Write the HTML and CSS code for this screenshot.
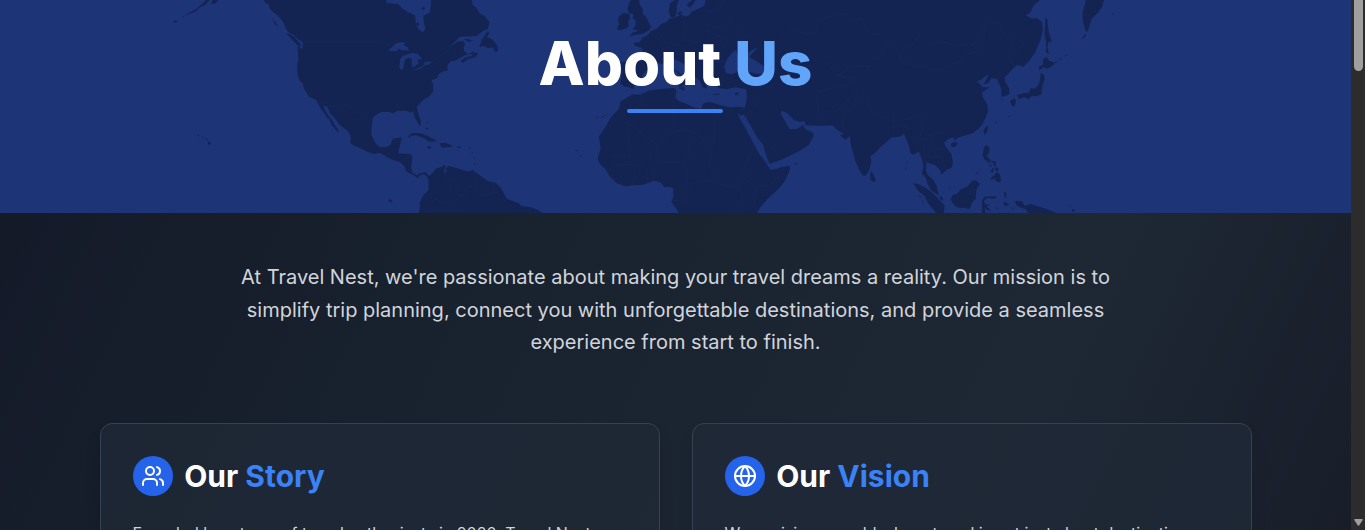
FILE: index.html
```html
<!DOCTYPE html>
<html lang="en">
<head>
<meta charset="utf-8">
<title>About Us - Travel Nest</title>
<link rel="stylesheet" href="styles.css">
</head>
<body>
<div class="viewport">
<main class="page">
  <header class="hero">
    <svg class="map" viewBox="0 0 1351 213" aria-hidden="true">
      <g class="land" transform="translate(160 0) scale(.33333)">
        <path d="M312 0 318 12 324 10 330 28 338 35 348 42 358 52 368 64 376 82 385 97 402 106 414 118 428 126 429 142 425 146 413 137 414 160 415 180 411 194 413 226 420 244 428 250 432 266 441 280 447 290 468 299 474 310 482 326 492 338 500 352 508 358 516 376 526 388 536 398 534 388 524 376 518 362 506 348 498 336 491 322 494 316 504 324 510 340 522 352 534 368 546 380 560 390 571 404 573 420 570 428 584 438 604 446 622 455 642 462 656 458 668 462 684 474 706 482 720 486 734 500 738 514 758 524 774 534 780 526 792 522 802 532 806 544 807 562 803 574 790 586 780 606 779 624 776 640H1080V611L1054 602 1042 598 1030 606 1037 592 1027 572 1008 548 984 544 968 532 940 512 920 514 908 510 882 502 864 498 858 506 855 494 846 500 828 506 818 518 808 528 796 516 780 520 770 526 758 518 753 502 756 486 756 466 744 462 714 460 720 436 725 412 698 416 692 434 680 441 660 442 646 430 634 404 635 380 638 354 652 342 666 336 690 336 700 340 712 332 740 332 752 338 760 334 764 352 774 370 780 379 783 364 776 344 770 322 776 314 792 298 806 290 819 276 820 254 814 240 830 236 836 222 850 214 863 212 862 196 872 184 890 180 904 172 914 166 928 162 948 164 940 154 926 162 914 156 910 142 916 132 910 124 894 124 874 138 860 152 880 130 900 110 950 108 968 94 984 86 988 66 974 48 958 40 950 24 938 16 936 0H814L812 22 808 38 790 48 792 70 796 86 790 96 780 92 768 76 765 46 744 36 728 26 714 12 680 9 678 0Z"/>
        <path d="m36 70 12-10 6 5Zm30-14 14-14 24-12 20-16 14-14h10l-12 14-18 9-12 12-20 8-16 6Zm92-56h18l-10 10-12 3ZM958 140l8-22 18-26 4 8-8 12 16 6 10 10 6 10 2 16-8 2-8-14-14 2-10-6ZM900 184l14-10 20-6 14-10 6 2-8 12-20 4-16 12ZM912 116l16 2 10 5-14 2ZM378 98l16 6 12 10 14 16 5 10-14-6-14-14ZM338 54l8 12 8 16-12-12ZM745 408l12-9 24 1 22 8 16 8 12 8-24 1-16-11-22-8-15 1-6 6ZM838 430l18-2 14 6 10 6-18 2-16 1ZM800 440l10-2 6 6-12 2ZM892 439l12 2-2 3-10-1ZM144 424l6 2 4 5-6 4-4-4ZM135 415l8 3-3 3ZM125 411h6v2h-6ZM113 406h4v3h-4ZM684 602l5-6 9 6-6 6ZM797 383l7 1v5l-6-2ZM798 366l8 2-8 2ZM926 441l7 3-3 2ZM935 454l3 6-2 2ZM941 470l3 6-2 2ZM943 487l2 8-3 1ZM938 509l5 1-2 4-4-1Z"/>
        <path class="water" d="m684 152 12-10 12-12 18-4 10 2-6 8 12 4 6 14-12-4-10 2-8-6-10 8ZM718 202l2-24 8-10 16-6 12-4 18 4 10 12v6l-12-4 4 14-8 6-8 7-6-10 2-14-8-6-12 4-4 14-2 16-5 4ZM756 212l14-6 24-10-2-9 22-4-2 8-18 6-10 8-20 6ZM852 509l6-6 1 14-5 6Z"/>
        <path class="land" d="M784 26l8-6 4 6-8 4ZM768 68l10 2-2 8-8-3Z"/>
        <path class="border" d="M426 124H656M656 122 692 137M786 192l26-5 26-17 25-17M862 154l14 22M886 146v20l10 10M470 307l28 2 18 11 30-4 14-1 24 26 12-6 38 36M684 474l4-12 8-14h18M720 486l20-14 14-6M808 540l-3 22M782 640l22-24 24-20 30 18M854 506l4 34 30 6 0 30 8 12 24-4v-20l26-10M946 530l2 30 14 26 52-10M976 548l2 30M1002 550l-2 28M858 622l18-4"/>
      </g>
      <g class="land" transform="translate(500 0) scale(.33333)">
        <path d="M0 558l4 8 8 20 12 12 18 8 22 12 30 4 20 8 14 10H0Z"/>
        <path d="M393 0h24l2 14 10 14 0 14 10 10 9 20 6 8-8 12-20 10-20 2-18 6 10-12 18-6-18-4 8-10 2-16-10-8 2-12-12-2-6-14 4-14ZM356 50l16-12 16 4 2 14-6 8 3 14-10 8-20 5-7-4 8-14-4-10ZM860 0V338L844 332 842 342 856 366 868 388 892 390 908 378 914 390 936 400 941 406 926 434 900 452 880 461 848 478 808 492 804 482 790 440 770 412 750 376 736 350 728 340 738 310 741 288 738 268 706 262 680 268 656 264 640 250 642 240 624 242 616 250 622 266 608 262 600 244 586 232 578 218 566 204 548 190 524 178 508 170 504 186 520 204 540 220 558 236 554 252 540 264 534 256 546 246 544 232 526 212 516 196 500 186 486 192 466 186 456 206 438 212 428 226 424 240 404 254 400 268 386 262 374 260 360 250 364 234 364 206 362 186 398 186 424 184 428 160 426 144 402 136 402 128 420 126 426 114 442 106 452 94 470 86 484 72 500 66 508 56 526 52 544 44 560 50 576 34 600 24 612 14 614 0Z"/>
        <path d="M398 283 420 284 446 272 490 266 524 264 530 272 526 290 534 302 560 312 586 324 604 326 608 312 622 306 640 308 660 316 690 322 712 320 730 322 736 340 722 348 712 336 720 356 736 384 750 410 766 440 780 464 792 478 806 500 812 510 840 504 868 498 870 508 858 534 838 564 800 600 782 620 770 640H538L514 606 520 590 520 566 510 560 494 562 480 546 462 542 430 554 400 556 376 559 350 550 330 530 316 508 298 490 293 476 302 444 296 410 316 382 334 350 356 328 362 304 386 290Z"/>
        <path d="m510 10 10-8 8-2h8l-6 18 0 20-6 14-12 0-6-18ZM536 36l12-2-6 12-8-2ZM576 0h10l-4 24-10 4-12-14ZM536 264l18-4-2 12ZM506 224l10-2 4 18-10 4ZM512 208l6-4v14l-4 2ZM638 282l22-1-4 4-18-1ZM705 280l14-4-8 10-6-1ZM884 490l12 0-8 4ZM226 450h6v3h-6ZM236 468l8-1v3ZM288 351l8-1-4 5ZM304 350l10-4-8 9ZM316 346l6-4-2 5ZM494 594h3v4Z"/>
        <path class="water" d="M678 218l-6-18 10-24 16-20 10-7 4 12 14 6 14-3 6-7 16-10 10-2-14 14-10 12 20 12 24 16 7 16-17 8-24-4-26-8-22 6-16 6ZM850 168l14-14 16-6 12 8 2 10-12 5 4 18-10 8 6 22 12 8 4 24-10 14-16-4-8-18-2-22-14-18 4-14ZM588 0h28l-2 16-14 8-22 10-14 14-10-4-8-10 18-6 14-14 6-8Z"/>
        <path class="water" d="M720 346 728 350 734 348 752 378 770 410 790 436 796 462 808 490 812 510 792 480 776 458 764 432 746 402 734 372Z"/>
        <path class="border" d="M424 276l6 36-44 26-22 16M328 356h36l108 78 56-42 44 4 70 36V318M524 268l-4 78 6 38M382 362l6 106-58 0M304 486h18M332 500l56-8 40 10M408 512l-12 46M438 508l5 40M456 500l5 42M472 434l-6 44 12 8 72 0 16-22 6-58M640 430l-12 56 10 40 14 22M550 486l14 38-8 36M560 556l40-12 36-2M724 530l24-62 10-22M724 530l42 28 40-2 48-40M768 560l-4 52M648 550l46 10 28-4M518 600l38 4 4-34M716 568l12 20-2 50M452 100l40 28M480 100l16 32M550 50l6 40-8 26M620 36l30-6 26-28M620 74l56 12 20-28M690 60l30 38 40 20M618 94l64 26-14 30M548 120l60 10 2 26M486 148l50-16M516 166l44-8M594 170l38 18 48-4M762 258l28 0 30 4M760 320l28-18M780 312l36 42M810 444l40-22M820 254l36-3M728 360l28-28"/>
      </g>
      <g class="land" transform="translate(780 0) scale(.33333)">
        <path d="M0 0H780L762 16 750 38 738 46 756 56 770 54 786 66 789 90 780 124 766 156 748 182 730 200 712 194 698 206 690 216 674 232 676 246 688 266 688 282 676 288 664 290 664 266 658 254 652 238 634 234 626 248 610 254 620 236 626 222 614 230 606 238 590 244 602 254 606 262 628 262 606 278 608 290 622 314 624 334 618 350 606 374 594 388 578 400 550 408 530 414 526 424 520 412 506 416 492 428 498 442 514 462 519 486 516 502 500 510 484 524 480 510 466 496 448 490 440 486 438 512 444 526 460 540 470 558 476 586 454 572 442 550 438 534 426 522 430 498 426 478 416 454 402 464 392 460 386 434 372 402 360 410 334 412 322 424 302 440 286 458 272 468 274 486 268 510 258 526 250 529 238 510 226 484 218 454 211 428 210 408 196 420 180 406 192 402 180 396 168 386 158 376 120 378 76 376 74 362 60 366 42 360 26 344 16 332 0 330Z"/>
        <path d="M0 338 16 366 28 388 52 386 62 380 68 374 76 388 96 396 102 406 88 430 60 450 20 470 0 476ZM0 502l30-4-4 20-12 26-14 18ZM274 514l6 8 8 20-8 4-8-6-2-14ZM512 432l10-6 12 2-8 12-10 1ZM610 394l6-12 8-5-2 16-7 12ZM796 54l6 4 4 38 10 30-10 0-4 16 5 20-9-4 0-34-4-22ZM790 176l10-4 8 10 16 6-4 8-16 10-14-4-8 6-4 4-1-12 12-6ZM782 218l10 6 2 14-8 24-2 22-16 5-14-1-8 10-12-6-18 2-6-8 20-6 16-2 6-14 12 2 12-12 4-16ZM716 288l14-2-3 8-12 4ZM690 302l14-8 4 10-5 16-9-4ZM918 0h54l-6 20-10 16-8 8-14 14-8 30-6 10-10-26-3-32ZM904 120l10-18 5 2-10 12ZM822 188l9-4-2 5ZM836 180l10-5-4 6ZM850 170l14-8-3 5ZM996 38l6 4-1 4ZM612 442l8-6 8 6 0 14-8 12 10 10 4 12-12-8-8-2-6-14ZM604 504l2-5-4 8-16 20 2-6ZM622 480l6 6-5 3ZM634 482l14 3-1 10-5 5-2-9ZM628 494l9 2-8 6ZM638 504l4 2-5 12-6-3ZM646 500l10 6-6 10-4-6ZM632 534l12-10 8-8 8 8 3 18-8 6-8-6-4-8-9 6ZM400 549l14 3 24 12 26 20 16 18 14 14-3 23h-22l-24-28-12-24-20-16ZM478 588l9 3 3 10-8 0ZM416 584l7 7-2 3ZM427 598l6 12-4-2ZM518 584l12-2 12-14 20-8 14-18 10-2 14 12-8 10-4 16 0 18-12 12-6 18-16-2-24-2-12-12-6-12ZM606 600l8-10 20-1 18 0-8 7-24-2-8 8 4 12 12-2-8 8 14 12-12-2-8-6 2 16h-10V616ZM672 578l4-4 4 10-4 6 6 4-8 0ZM706 602l20 2 8 14 18-6 26 8 26 8 22 10 4 2H744l-6-12-20-6-10-8ZM670 608l8-2 10 8-14 4ZM690 623l14 0-6 4ZM646 623l10 0-4 4ZM862 613l14 10-6-2ZM876 627l10 2-4 7-6-3ZM378 484l5 0-2 8ZM377 498l3 10-3 1ZM506 563l6 0-2 5ZM646 366l4-2-3 8ZM686 348h4v4h-4ZM660 300l6-3 2 3Z"/>
        <path class="border" d="M0 102l40-14 36 14 36-4V62l60-20 26 2 20 20 22-10 32 46 26 2M318 120l-10 48-36 10M272 200l-18 16 18-18h-56l-40 26 24 12 30-4M92 170l26 20 26 0 22 34 34 10M100 256l18 20 58-18 24 0 26-20M110 284l6 60 16 20M118 336l50 0 28-30 26-24M230 270l-10 20 14 16-48 50 8 30M242 280l20 12 4 28 22 24 54 20 60-10 16-10 8 12M340 350l2 50M350 372l34 8M330 122l30 42 4 24 44 10 72 12 44-20 18-6 8-20 46-10-24-24-40 10-40-14-40 4-34-26-22 32-26 8M574 134l40-22-2-32 20-14 26 4 14 38 26 10-10 50 18 36M416 350l16 14-14 50 24 4M442 406l30-4 22-6M450 412l20 34 24 6M442 446l8 28 30-4M430 430l8 58M564 584l20-28M704 150l30-16"/>
      </g>
    </svg>
    <h1 class="hero-title">About <span class="light">Us</span></h1>
    <div class="rule"></div>
  </header>
  <section class="content">
    <p class="intro">At Travel Nest, we're passionate about making your travel dreams a reality. Our mission is to simplify trip planning, connect you with unforgettable destinations, and provide a seamless experience from start to finish.</p>
    <div class="cards">
      <article class="card">
        <div class="card-head">
          <span class="badge"><svg class="icon" viewBox="0 0 24 24"><path d="M16 21v-2a4 4 0 0 0-4-4H6a4 4 0 0 0-4 4v2"/><circle cx="9" cy="7" r="4"/><path d="M22 21v-2a4 4 0 0 0-3-3.87M16 3.13a4 4 0 0 1 0 7.75"/></svg></span>
          <h2 class="card-title">Our <span class="accent">Story</span></h2>
        </div>
        <p class="card-text">Founded by a team of travel enthusiasts in 2020, Travel Nest</p>
      </article>
      <article class="card">
        <div class="card-head">
          <span class="badge"><svg class="icon globe" viewBox="0 0 24 24"><circle cx="12" cy="12" r="10"/><path d="M12 2a14.5 14.5 0 0 0 0 20 14.5 14.5 0 0 0 0-20M2 12h20"/></svg></span>
          <h2 class="card-title">Our <span class="accent">Vision</span></h2>
        </div>
        <p class="card-text">We envision a world where travel is not just about destinations</p>
      </article>
    </div>
  </section>
</main>
<div class="scrollbar"><div class="thumb"></div><svg class="arrow" viewBox="0 0 9 7"><path d="M1 0h7q1 0 .7 1L5.3 6.3q-.8 1-1.6 0L.3 1Q0 0 1 0Z"/></svg></div>
</div>
</body>
</html>
```
FILE: styles.css
```css
* { box-sizing: border-box; margin: 0; }
body { font-family: Inter, "Liberation Sans", sans-serif; background: #111827; overflow: hidden; }
.viewport { display: flex; height: 530px; overflow: hidden; }
.page { width: 1351px; flex: none; background: linear-gradient(115deg, #131827 0%, #18212e 34%, #1e2835 76%, #181d29 100%); }
.hero { height: 213px; display: flex; flex-direction: column; align-items: center; background: #1d3477; position: relative; padding-top: 33px; }
.map { position: absolute; inset: 0; width: 1351px; height: 213px; }
.land { fill: #142452; }
.water { fill: #1d3477; }
.border { fill: none; stroke: #182a5d; stroke-width: 1.5; }
.hero-title { position: relative; font-size: 60px; line-height: 60px; font-weight: 800; color: #fff; }
.light { color: #60a5fa; }
.rule { position: relative; width: 96px; height: 4px; border-radius: 4px; background: #3b82f6; margin: 16px 1px 0 0; }
.content { padding: 48px 99.6px 0; }
.intro { width: 896px; margin: 0 auto; text-align: center; font-size: 20px; line-height: 32.5px; color: #d1d5db; }
.cards { display: grid; grid-template-columns: 560px 560px; gap: 32px; margin-top: 64px; }
.card { height: 300px; padding: 32px; border: 1px solid #374151; border-radius: 12px; background: rgba(31, 41, 55, .8); box-shadow: 0 10px 15px rgba(0, 0, 0, .1); }
.card-head { display: flex; align-items: center; gap: 11.6px; }
.badge { width: 40px; height: 40px; border-radius: 50%; background: #2563eb; display: grid; place-items: center; }
.icon { width: 24px; height: 24px; fill: none; stroke: #fff; stroke-width: 2; stroke-linecap: round; stroke-linejoin: round; }
.card-title { font-size: 30px; line-height: 36px; font-weight: 700; color: #fff; }
.accent { color: #3b82f6; }
.card-text { margin-top: 24px; font-size: 16px; line-height: 26px; color: #d1d5db; white-space: nowrap; }
.scrollbar { width: 14px; flex: none; background: #2c2c2c; display: flex; flex-direction: column; align-items: center; justify-content: space-between; padding-bottom: 4px; }
.thumb { width: 9px; height: 71px; border-radius: 0 0 5px 5px; background: #9f9f9f; }
.arrow { width: 9px; height: 7px; fill: #9f9f9f; }
```
